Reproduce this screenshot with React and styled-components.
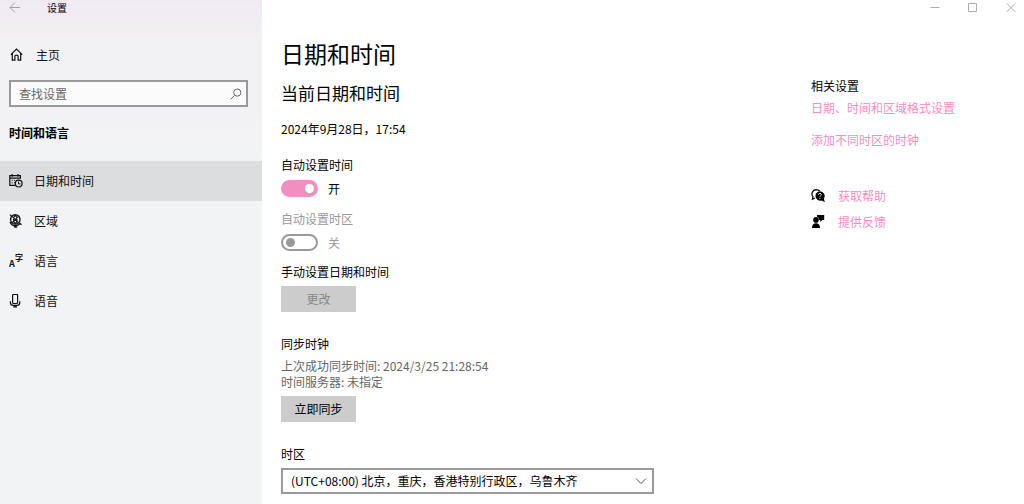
import React, { useState } from "react";
import styled, { createGlobalStyle } from "styled-components";

const navItems = [
  { id: "datetime", label: "日期和时间", Icon: CalendarIcon },
  { id: "region", label: "区域", Icon: GlobeIcon },
  { id: "language", label: "语言", Icon: LanguageIcon },
  { id: "speech", label: "语音", Icon: MicIcon },
];

const App = () => {
  const [current, setCurrent] = useState("datetime");
  const [autoTime, setAutoTime] = useState(true);

  return (
    <>
      <GlobalStyle />
      <Window>
        <Sidebar>
          <TitleBar>
            <BackButton aria-label="返回">
              <BackIcon />
            </BackButton>
            <span>设置</span>
          </TitleBar>
          <HomeLink href="#home">
            <HomeIcon />
            主页
          </HomeLink>
          <SearchBox>
            <SearchInput type="search" aria-label="查找设置" placeholder="查找设置" />
            <SearchIcon />
          </SearchBox>
          <Category>时间和语言</Category>
          <nav>
            {navItems.map(({ id, label, Icon }) => (
              <NavLink
                key={id}
                href={`#${id}`}
                $active={current === id}
                onClick={() => setCurrent(id)}
              >
                <Icon />
                {label}
              </NavLink>
            ))}
          </nav>
        </Sidebar>

        <Content>
          <WindowControls>
            <ControlButton aria-label="最小化">
              <svg width="10" height="10" viewBox="0 0 10 10">
                <path d="M0.5 4.5h9" />
              </svg>
            </ControlButton>
            <ControlButton aria-label="最大化">
              <svg width="10" height="10" viewBox="0 0 10 10">
                <path d="M0.5 0.5h8v8h-8z" />
              </svg>
            </ControlButton>
            <ControlButton aria-label="关闭">
              <svg width="10" height="10" viewBox="0 0 10 10">
                <path d="M0.8 0.4l8.4 8.4M9.2 0.4L0.8 8.8" />
              </svg>
            </ControlButton>
          </WindowControls>

          <Columns>
            <Main>
              <Title>日期和时间</Title>
              <Subtitle>当前日期和时间</Subtitle>
              <Now>2024年9月28日，17:54</Now>

              <ToggleGroup>
                <Label htmlFor="auto-time">自动设置时间</Label>
                <ToggleRow>
                  <Toggle
                    id="auto-time"
                    type="checkbox"
                    role="switch"
                    checked={autoTime}
                    onChange={(e) => setAutoTime(e.target.checked)}
                  />
                  <span>{autoTime ? "开" : "关"}</span>
                </ToggleRow>
              </ToggleGroup>
              <ToggleGroup>
                <Label htmlFor="auto-zone" $disabled>
                  自动设置时区
                </Label>
                <ToggleRow $disabled>
                  <Toggle id="auto-zone" type="checkbox" role="switch" disabled />
                  <span>关</span>
                </ToggleRow>
              </ToggleGroup>
              <Group>
                <Heading>手动设置日期和时间</Heading>
                <Button disabled>更改</Button>
              </Group>

              <Group $spaced>
                <Heading>同步时钟</Heading>
                <SyncInfo>
                  上次成功同步时间: 2024/3/25 21:28:54
                  <br />
                  时间服务器: 未指定
                </SyncInfo>
                <Button>立即同步</Button>
              </Group>

              <Group $spaced>
                <Label htmlFor="timezone">时区</Label>
                <SelectBox>
                  <Select id="timezone">
                    <option>(UTC+08:00) 北京，重庆，香港特别行政区，乌鲁木齐</option>
                  </Select>
                  <ChevronIcon />
                </SelectBox>
              </Group>
            </Main>

            <Related>
              <Heading>相关设置</Heading>
              <RelatedLinks>
                <Link href="#format">日期、时间和区域格式设置</Link>
                <Link href="#clocks">添加不同时区的时钟</Link>
              </RelatedLinks>
              <HelpLinks>
                <HelpRow>
                  <HelpIcon />
                  <Link href="#help">获取帮助</Link>
                </HelpRow>
                <HelpRow>
                  <FeedbackIcon />
                  <Link href="#feedback">提供反馈</Link>
                </HelpRow>
              </HelpLinks>
            </Related>
          </Columns>
        </Content>
      </Window>
    </>
  );
};

function BackIcon() {
  return (
    <svg width="12" height="12" viewBox="0 0 12 12" fill="none" stroke="#a3a0a5">
      <path d="M11 5.5H1M5.8 0.7L1 5.5l4.8 4.8" />
    </svg>
  );
}

function HomeIcon() {
  return (
    <svg width="14" height="14" viewBox="0 0 14 14" fill="none" stroke="#111" strokeWidth="1.2">
      <path d="M0.8 6.7L6.5 1l5.7 5.7M2.3 5.5v6.7h2.6V8.1q0-1 1.6-1t1.6 1v4.1h2.6V5.5" />
    </svg>
  );
}

function SearchIcon() {
  return (
    <svg width="12" height="12" viewBox="0 0 12 12" fill="none" stroke="#666">
      <circle cx="7.3" cy="4.6" r="3.6" />
      <path d="M4.7 7.3L0.9 11.2" />
    </svg>
  );
}

function CalendarIcon() {
  return (
    <svg width="14" height="14" viewBox="0 0 14 14" fill="none" stroke="#111">
      <path d="M6.3 11.4H0.8V1.6h10.6v3.2M0.8 4.2h10.6M3.2 0v2.7M9 0v2.7" strokeWidth="1.2" />
      <path d="M2.7 6.4h1M5 6.4h1M7.3 6.4h1M2.7 8.8h1M5 8.8h1" />
      <circle cx="9.7" cy="9.6" r="3.4" strokeWidth="1.2" />
      <path d="M9.5 7.6v2.3h1.9" />
    </svg>
  );
}

function GlobeIcon() {
  return (
    <svg width="14" height="14" viewBox="0 0 14 14" fill="none" stroke="#111">
      <circle cx="6.3" cy="5.4" r="4.7" strokeWidth="1.4" />
      <path
        d="M2.9 2.2l6.8 6.6M9.7 2.2L2.9 8.8M6.3 1.2Q2.4 5.4 6.3 9.8M6.3 1.2q3.9 4.2 0 8.6"
        strokeWidth="1.1"
      />
      <path
        d="M1 0.6l1.4 1.4M1 7.9q1.4 3.7 5.3 3.8 3 0 4.7-2.2l1.5 1.3M6.7 11.7v1.5M5.2 13h3"
        strokeWidth="1.3"
      />
    </svg>
  );
}

function LanguageIcon() {
  return (
    <GlyphIcon width="14" height="24" viewBox="0 -5 14 24" fill="#111">
      <text x="0" y="13" fontSize="9">
        A
      </text>
      <text x="6" y="7" fontSize="8">
        字
      </text>
    </GlyphIcon>
  );
}

function MicIcon() {
  return (
    <svg width="14" height="14" viewBox="0 0 14 14" fill="none" stroke="#111" strokeWidth="1.2">
      <rect x="3.6" y="0.3" width="5" height="9.2" rx="1" />
      <path d="M1.4 7.2v1.2q0 2.9 2.9 2.9h3.6q2.9 0 2.9-2.9V7.2M6.1 11.3v1.6M4.2 12.9h3.8" />
    </svg>
  );
}

function ChevronIcon() {
  return (
    <svg width="12" height="12" viewBox="0 0 12 12" fill="none" stroke="#555">
      <path d="M1 3.5l5 5 5-5" />
    </svg>
  );
}

function HelpIcon() {
  return (
    <svg width="14" height="14" viewBox="0 0 14 14">
      <path
        d="M3.9 9L1.4 10.2l.6-2.5A4.3 4.3 0 0 1 5 .6q2.4 0 3.8 1.4"
        fill="none"
        stroke="#000"
        strokeWidth="1.2"
      />
      <path d="M8.9 2.2a4.8 4.8 0 0 1 4 7.4l.9 3.7-3.2-1.7A4.8 4.8 0 1 1 8.9 2.2z" />
      <path
        d="M7.5 5.7q0-1.3 1.4-1.3t1.4 1.2q0 .7-.8 1.1-.6.4-.6 1M8.9 8.8v1"
        fill="none"
        stroke="#fff"
        strokeWidth="0.9"
      />
    </svg>
  );
}

function FeedbackIcon() {
  return (
    <svg width="14" height="14" viewBox="0 0 14 14">
      <circle cx="5" cy="4.9" r="2.8" />
      <path d="M1 13q0-4.7 4-4.7T9 13z" />
      <path d="M6 0h7.2v5h-1.9L9.2 7V5h-.9Q8.3 2.4 6 1.4z" />
    </svg>
  );
}

const GlobalStyle = createGlobalStyle`
  *, *::before, *::after {
    box-sizing: border-box;
  }

  body {
    margin: 0;
    background: #fff;
    color: #000;
    font-family: "Noto Sans CJK SC", sans-serif;
    font-size: 12px;
    line-height: 16px;
  }

  button, input, select {
    font: inherit;
    color: inherit;
  }

  h1, h2, h3, p {
    margin: 0;
    font-weight: 400;
  }
`;

const Window = styled.div`
  display: flex;
  min-height: 100vh;
`;

const Sidebar = styled.aside`
  flex: 0 0 262px;
  background: linear-gradient(#f0e9f3, #f2f1f3 40px, #f2f3f5 160px);
`;

const TitleBar = styled.div`
  display: flex;
  align-items: center;
  gap: 26px;
  height: 16px;
  padding-left: 9px;
  font-size: 10px;
`;

const BackButton = styled.button`
  display: flex;
  padding: 0;
  border: 0;
  background: none;
`;

const HomeLink = styled.a`
  display: flex;
  align-items: center;
  gap: 12px;
  height: 24px;
  margin-top: 27px;
  padding-left: 10px;
  color: #111;
  text-decoration: none;
`;

const SearchBox = styled.div`
  display: flex;
  align-items: center;
  height: 27px;
  margin: 13px 14px 0 9px;
  padding-right: 4px;
  border: 2px solid #999;
  background: #fbfbfc;
`;

const SearchInput = styled.input`
  flex: 1;
  min-width: 0;
  padding: 0 8px;
  border: 0;
  outline: 0;
  background: none;

  &::placeholder {
    color: #666;
    opacity: 1;
  }
`;

const Category = styled.h2`
  margin: 18px 0 20px;
  padding-left: 9px;
  font-size: 12px;
  font-weight: 700;
`;

const NavLink = styled.a`
  display: flex;
  align-items: center;
  gap: 11px;
  height: 40px;
  padding-left: 9px;
  background: ${({ $active }) => ($active ? "#dcddde" : "transparent")};
  color: #111;
  text-decoration: none;

  &:hover {
    background: #dcddde;
  }
`;

const GlyphIcon = styled.svg`
  font-weight: 700;
`;

const Content = styled.div`
  flex: 1;
  min-width: 0;
`;

const WindowControls = styled.div`
  display: flex;
  justify-content: flex-end;
  gap: 28px;
  height: 16px;
  padding-right: 8px;
`;

const ControlButton = styled.button`
  display: flex;
  align-items: center;
  padding: 0;
  border: 0;
  background: none;

  svg {
    fill: none;
    stroke: #aaa;
  }
`;

const Columns = styled.div`
  display: flex;
  justify-content: space-between;
  padding-left: 19px;
`;

const Main = styled.main`
  flex: 1;
  min-width: 0;
  max-width: 373px;
  padding: 21px 0 10px;
`;

const Title = styled.h1`
  font-size: 23px;
  line-height: 32px;
`;

const Subtitle = styled.h2`
  margin-top: 12px;
  font-size: 17px;
  line-height: 24px;
`;

const Now = styled.p`
  margin: 16px 0 20px;
`;

const Group = styled.section`
  display: flex;
  flex-direction: column;
  align-items: flex-start;
  gap: 6px;
  margin-top: ${({ $spaced }) => ($spaced ? "24px" : "13px")};
`;

const ToggleGroup = styled(Group)`
  gap: 7px;
  margin-top: 14px;
`;

const Label = styled.label`
  color: ${({ $disabled }) => ($disabled ? "#999" : "#000")};
`;

const Heading = styled.h3`
  font-size: 12px;
`;

const ToggleRow = styled.div`
  display: flex;
  align-items: center;
  gap: 10px;
  color: ${({ $disabled }) => ($disabled ? "#999" : "#000")};
`;

const Toggle = styled.input`
  appearance: none;
  display: flex;
  align-items: center;
  width: 37px;
  height: 17px;
  margin: 0;
  padding: 0 3px;
  border: 2px solid #999;
  border-radius: 9px;

  &::before {
    content: "";
    width: 9px;
    height: 9px;
    border-radius: 50%;
    background: #999;
  }

  &:checked {
    justify-content: flex-end;
    padding: 0 2px;
    border-color: #f08fc0;
    background: #f08fc0;
  }

  &:checked::before {
    background: #fff;
  }
`;

const Button = styled.button`
  min-width: 75px;
  height: 26px;
  padding: 0 12px;
  border: 0;
  background: #ccc;

  &:disabled {
    color: #888;
  }
`;

const SyncInfo = styled.p`
  color: #666;
`;

const SelectBox = styled.div`
  position: relative;
  width: 100%;

  svg {
    position: absolute;
    top: 7px;
    right: 7px;
    pointer-events: none;
  }
`;

const Select = styled.select`
  appearance: none;
  width: 100%;
  height: 26px;
  padding: 0 24px 0 8px;
  border: 2px solid #999;
  border-radius: 0;
  background: #fff;
`;

const Related = styled.aside`
  flex: 0 0 213px;
  padding-top: 62px;
`;

const RelatedLinks = styled.div`
  display: flex;
  flex-direction: column;
  align-items: flex-start;
  gap: 16px;
  margin-top: 6px;
`;

const Link = styled.a`
  color: #f08fc0;
  text-decoration: none;
`;

const HelpLinks = styled.div`
  display: flex;
  flex-direction: column;
  gap: 10px;
  margin-top: 40px;
`;

const HelpRow = styled.div`
  display: flex;
  align-items: center;
  gap: 13px;
`;

export default App;
